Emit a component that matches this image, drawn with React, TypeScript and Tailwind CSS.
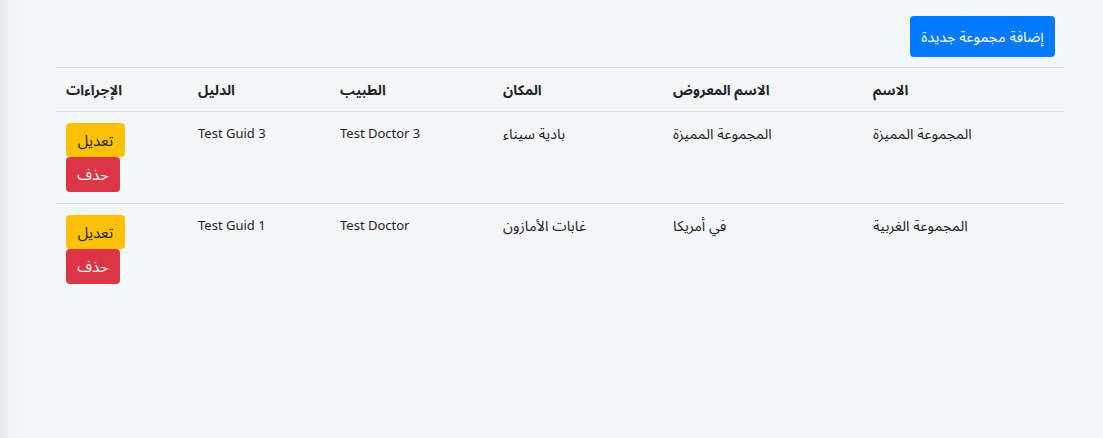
import React from 'react';

type Group = {
  name: string;
  displayName: string;
  place: string;
  doctor: string;
  guide: string;
};

const groups: Group[] = [
  { name: 'المجموعة المميزة', displayName: 'المجموعة المميزة', place: 'بادية سيناء', doctor: 'Test Doctor 3', guide: 'Test Guid 3' },
  { name: 'المجموعة الغربية', displayName: 'في أمريكا', place: 'غابات الأمازون', doctor: 'Test Doctor', guide: 'Test Guid 1' },
];

const columns = [
  { label: 'الاسم', width: 'w-[201px]' },
  { label: 'الاسم المعروض', width: 'w-[200px]' },
  { label: 'المكان', width: 'w-[170px]' },
  { label: 'الطبيب', width: 'w-[163px]' },
  { label: 'الدليل', width: 'w-[142px]' },
  { label: 'الإجراءات', width: 'w-[132px]' },
];

export default function App() {
  return (
    <div className="min-h-[438px] flex bg-[#f5f6fa] text-[#212529] font-['Noto_Sans','Noto_Sans_Arabic','DejaVu_Sans',sans-serif]">
      {/* sidebar shadow */}
      <div className="w-5 shrink-0 bg-gradient-to-r from-[#eaecf0] to-[#f5f6fa]"></div>

      <main dir="rtl" className="flex-1 pt-4 pr-[39px] pl-9">
        <div className="flex mb-[10px] pr-[9px]">
          <button className="h-[41px] w-[145px] bg-[#007bff] text-white text-[14.5px] rounded-[4px]">
            إضافة مجموعة جديدة
          </button>
        </div>

        <table className="w-full border-collapse table-fixed">
          <thead>
            <tr className="border-t border-b border-[#dee2e6]">
              {columns.map((c) => (
                <th key={c.label} className={`${c.width} h-[44px] text-left font-bold text-[14px] leading-5 py-0 px-[10px]`}>
                  {c.label}
                </th>
              ))}
            </tr>
          </thead>
          <tbody>
            {groups.map((g, i) => (
              <tr key={g.guide} className={i < groups.length - 1 ? 'border-b border-[#dee2e6]' : ''}>
                <td className="text-left align-top text-[14.5px] leading-5 pt-[11px] pb-[11px] px-[10px]">{g.name}</td>
                <td className="text-left align-top text-[14.5px] leading-5 pt-[11px] pb-[11px] px-[10px]">{g.displayName}</td>
                <td className="text-left align-top text-[14.5px] leading-5 pt-[11px] pb-[11px] px-[10px]">{g.place}</td>
                <td className="text-left align-top text-[13px] leading-5 pt-[11px] pb-[11px] px-[10px]" dir="ltr">{g.doctor}</td>
                <td className="text-left align-top text-[13px] leading-5 pt-[11px] pb-[11px] px-[10px]" dir="ltr">{g.guide}</td>
                <td className="text-left align-top pt-[11px] pb-[11px] px-[10px]">
                  <div className="flex flex-col items-end">
                    <button className="h-[34px] w-[59px] bg-[#ffc107] text-[#212529] text-[15px] rounded-[4px]">تعديل</button>
                    <button className="h-[35px] w-[54px] bg-[#dc3545] text-white text-[15px] rounded-[4px]">حذف</button>
                  </div>
                </td>
              </tr>
            ))}
          </tbody>
        </table>
      </main>
    </div>
  );
}
